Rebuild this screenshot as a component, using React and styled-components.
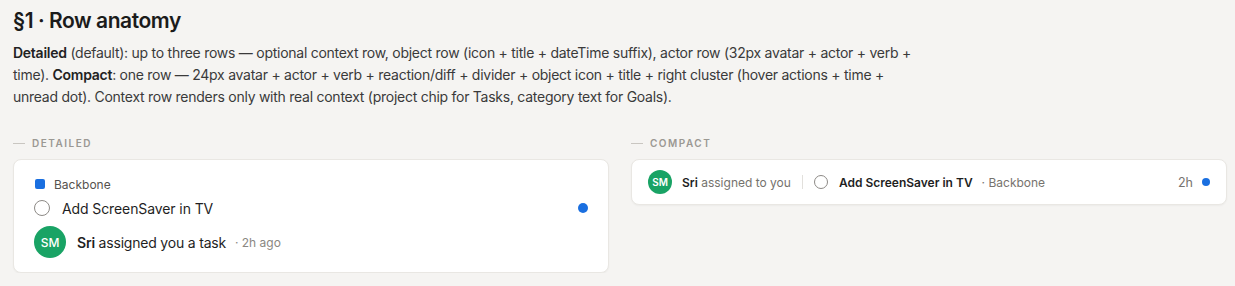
import React from "react";
import styled, { createGlobalStyle } from "styled-components";

const Global = createGlobalStyle`
  html, body { margin: 0; padding: 0; background: #f5f4f2; }
  body { font-family: Inter, "Noto Sans", sans-serif; color: #1f1f1f; -webkit-font-smoothing: antialiased; }
`;

const Page = styled.div`
  padding: 8px 8px 0 13px;
`;

const Title = styled.h2`
  margin: 0;
  font-size: 21px;
  line-height: 26px;
  font-weight: 600;
  letter-spacing: -0.45px;
  color: #1b1b1b;
`;

const Desc = styled.p`
  margin: 8px 0 0;
  max-width: 908px;
  font-size: 14px;
  line-height: 22px;
  letter-spacing: -0.26px;
  color: #3a3a3a;
  b { font-weight: 600; color: #222; }
`;

const Columns = styled.div`
  display: grid;
  grid-template-columns: 1fr 1fr;
  column-gap: 22px;
  margin-top: 28px;
  align-items: start;
`;

const Column = styled.div`
  display: flex;
  flex-direction: column;
  gap: 9px;
`;

const SectionLabel = styled.div`
  display: flex;
  align-items: center;
  gap: 7px;
  font-size: 10px;
  line-height: 14px;
  font-weight: 600;
  letter-spacing: 1.5px;
  text-transform: uppercase;
  color: #9b9893;
  &::before {
    content: "";
    width: 12px;
    height: 1px;
    background: #c9c6c1;
  }
`;

const Card = styled.div`
  background: #fff;
  border: 1px solid #e9e7e3;
  border-radius: 8px;
  box-shadow: 0 1px 2px rgba(0, 0, 0, 0.04);
  padding: ${(p) => (p.$compact ? "10px 16px" : "16px 20px 14px")};
  display: flex;
  flex-direction: ${(p) => (p.$compact ? "row" : "column")};
  align-items: ${(p) => (p.$compact ? "center" : "stretch")};
`;

const ContextRow = styled.div`
  display: flex;
  align-items: center;
  gap: 9px;
  height: 16px;
  font-size: 12px;
  color: #55524e;
  padding-left: 1px;
`;

const ChipSquare = styled.span`
  width: 10px;
  height: 10px;
  border-radius: 2px;
  background: #1a6fe0;
`;

const ObjectRow = styled.div`
  display: flex;
  align-items: center;
  gap: 12px;
  height: 20px;
  margin-top: 6px;
`;

const TaskCircle = styled.span`
  box-sizing: border-box;
  flex: none;
  width: ${(p) => p.$size}px;
  height: ${(p) => p.$size}px;
  border-radius: 50%;
  border: 1.5px solid #8d8a86;
`;

const ObjTitle = styled.span`
  font-size: ${(p) => (p.$compact ? "12px" : "14px")};
  font-weight: ${(p) => (p.$compact ? 600 : 400)};
  letter-spacing: ${(p) => (p.$compact ? "0" : "-0.1px")};
  color: #1f1f1f;
`;

const UnreadDot = styled.span`
  flex: none;
  width: ${(p) => p.$size}px;
  height: ${(p) => p.$size}px;
  border-radius: 50%;
  background: #1a6fe0;
  margin-left: auto;
`;

const ActorRow = styled.div`
  display: flex;
  align-items: center;
  gap: 11px;
  margin-top: 8px;
`;

const Avatar = styled.span`
  flex: none;
  width: ${(p) => p.$size}px;
  height: ${(p) => p.$size}px;
  border-radius: 50%;
  background: #19a365;
  color: #fff;
  display: flex;
  align-items: center;
  justify-content: center;
  font-size: ${(p) => (p.$size > 28 ? "12px" : "10px")};
  font-weight: ${(p) => (p.$size > 28 ? 500 : 600)};
`;

const ActorText = styled.span`
  font-size: 14px;
  letter-spacing: -0.2px;
  color: #1f1f1f;
  b { font-weight: 600; }
`;

const Meta = styled.span`
  font-size: 12px;
  color: #8a8782;
  margin-left: -2px;
`;

const CompactActor = styled.span`
  margin-left: 10px;
  font-size: 12px;
  color: #75726d;
  b { font-weight: 600; color: #1f1f1f; }
`;

const Divider = styled.span`
  width: 1px;
  height: 14px;
  background: #e2e0dc;
  margin: 0 11px;
`;

const CompactTitleGroup = styled.span`
  display: flex;
  align-items: center;
  gap: 11px;
`;

const Context = styled.span`
  font-size: 12px;
  color: #77736e;
  margin-left: 9px;
`;

const RightCluster = styled.span`
  margin-left: auto;
  display: flex;
  align-items: center;
  gap: 9px;
  font-size: 12.5px;
  color: #77736e;
`;

export default function App() {
  return (
    <>
      <Global />
      <Page>
        <Title>§1 · Row anatomy</Title>
        <Desc>
          <b>Detailed</b> (default): up to three rows — optional context row, object row (icon + title + dateTime
          suffix), actor row (32px avatar + actor + verb + time). <b>Compact</b>: one row — 24px avatar + actor +
          verb + reaction/diff + divider + object icon + title + right cluster (hover actions + time + unread dot).
          Context row renders only with real context (project chip for Tasks, category text for Goals).
        </Desc>
        <Columns>
          <Column>
            <SectionLabel>Detailed</SectionLabel>
            <Card>
              <ContextRow>
                <ChipSquare />
                Backbone
              </ContextRow>
              <ObjectRow>
                <TaskCircle $size={16} />
                <ObjTitle>Add ScreenSaver in TV</ObjTitle>
                <UnreadDot $size={10} />
              </ObjectRow>
              <ActorRow>
                <Avatar $size={32}>SM</Avatar>
                <ActorText>
                  <b>Sri</b> assigned you a task
                </ActorText>
                <Meta>· 2h ago</Meta>
              </ActorRow>
            </Card>
          </Column>
          <Column>
            <SectionLabel>Compact</SectionLabel>
            <Card $compact>
              <Avatar $size={24}>SM</Avatar>
              <CompactActor>
                <b>Sri</b> assigned to you
              </CompactActor>
              <Divider />
              <CompactTitleGroup>
                <TaskCircle $size={14} />
                <ObjTitle $compact>Add ScreenSaver in TV</ObjTitle>
              </CompactTitleGroup>
              <Context>· Backbone</Context>
              <RightCluster>
                2h
                <UnreadDot $size={8} />
              </RightCluster>
            </Card>
          </Column>
        </Columns>
      </Page>
    </>
  );
}
